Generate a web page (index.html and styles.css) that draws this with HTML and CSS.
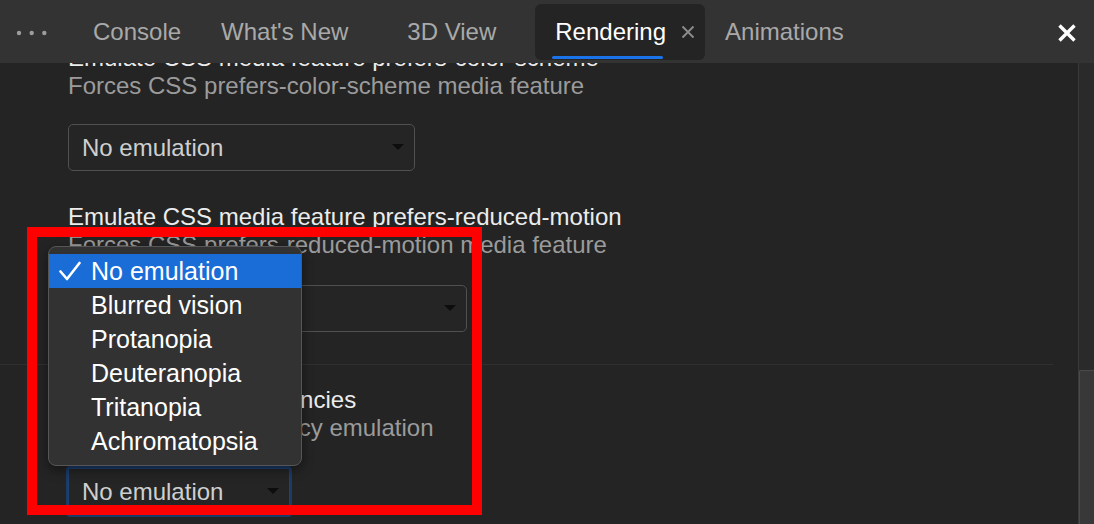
FILE: index.html
```html
<!DOCTYPE html>
<html lang="en">
<head>
<meta charset="utf-8">
<title>Rendering</title>
<link rel="stylesheet" href="styles.css">
</head>
<body>
<div class="tabbar">
  <div class="more">
    <svg width="40" height="8" viewBox="0 0 40 8"><circle cx="5" cy="4" r="2.2"/><circle cx="17.7" cy="4" r="2.2"/><circle cx="30.3" cy="4" r="2.2"/></svg>
  </div>
  <div class="tab">Console</div>
  <div class="tab closeable">What's New<span class="tab-close ghost"></span></div>
  <div class="tab closeable">3D View<span class="tab-close ghost"></span></div>
  <div class="tab closeable active">Rendering<span class="tab-close"><svg width="14" height="14" viewBox="0 0 14 14"><path d="M1.5 1.5 L12.5 12.5 M12.5 1.5 L1.5 12.5"/></svg></span></div>
  <div class="tab">Animations</div>
  <div class="spacer"></div>
  <div class="panel-close"><svg width="20" height="20" viewBox="0 0 20 20"><path d="M2.5 2.5 L17.5 17.5 M17.5 2.5 L2.5 17.5"/></svg></div>
</div>
<div class="main">
  <div class="content">
    <div class="scrolled">
      <div class="group">
        <div class="setting">
          <div class="title">Emulate CSS media feature prefers-color-scheme</div>
          <div class="desc">Forces CSS prefers-color-scheme media feature</div>
          <div class="select w-color"><span>No emulation</span><i class="arrow"></i></div>
        </div>
        <div class="setting">
          <div class="title">Emulate CSS media feature prefers-reduced-motion</div>
          <div class="desc">Forces CSS prefers-reduced-motion media feature</div>
          <div class="select w-motion"><span>No emulation</span><i class="arrow"></i></div>
        </div>
      </div>
      <div class="divider"></div>
      <div class="group">
        <div class="setting">
          <div class="title">Emulate vision deficiencies</div>
          <div class="desc">Forces vision deficiency emulation</div>
          <div class="select w-vision focused"><span>No emulation</span><i class="arrow"></i></div>
        </div>
      </div>
    </div>
  </div>
  <div class="scrollbar"><div class="thumb"></div></div>
</div>

<div class="highlight-box"></div>

<div class="popup">
  <div class="item selected"><span class="check"><svg width="22" height="20" viewBox="0 0 22 20"><path d="M1.5 10.5 L8 18 L20.5 2"/></svg></span>No emulation</div>
  <div class="item"><span class="check"></span>Blurred vision</div>
  <div class="item"><span class="check"></span>Protanopia</div>
  <div class="item"><span class="check"></span>Deuteranopia</div>
  <div class="item"><span class="check"></span>Tritanopia</div>
  <div class="item"><span class="check"></span>Achromatopsia</div>
</div>
</body>
</html>
```

FILE: styles.css
```css
* { box-sizing: border-box; }
html, body {
  margin: 0;
  padding: 0;
  width: 1094px;
  height: 524px;
  overflow: hidden;
  background: #242424;
  font-family: "Liberation Sans", Arial, sans-serif;
}

.tabbar {
  height: 63px;
  background: #333333;
  display: flex;
  align-items: center;
  color: #a9a9a9;
  font-size: 24px;
}
.more {
  width: 73px;
  height: 56px;
  display: flex;
  align-items: center;
  padding-left: 14px;
  padding-top: 3px;
}
.more svg { fill: #9c9c9c; }
.tab {
  height: 56px;
  display: flex;
  align-items: center;
  padding: 0 20px;
  white-space: nowrap;
  position: relative;
}
.tab.closeable { padding-right: 10px; }
.tab-close {
  width: 14px;
  height: 14px;
  margin-left: 15px;
  display: flex;
}
.tab-close.ghost { visibility: hidden; }
.tab-close svg { stroke: #8a8a8a; stroke-width: 2; fill: none; }
.tab.active {
  background: #242424;
  color: #ffffff;
  border-radius: 6px;
}
.tab.active::after {
  content: "";
  position: absolute;
  left: 17px;
  width: 111px;
  bottom: 1px;
  height: 3px;
  border-radius: 2px;
  background: #1a73e8;
}
.spacer { flex: 1; }
.panel-close {
  width: 20px;
  height: 20px;
  margin-right: 17px;
  margin-top: 3px;
  display: flex;
}
.panel-close svg { stroke: #ffffff; stroke-width: 3.4; fill: none; }

.main {
  display: flex;
  height: 461px;
}
.content {
  flex: 1;
  overflow: hidden;
}
.scrolled {
  margin-top: -19px;
}
.group {
  padding-left: 68px;
}
.setting + .setting { margin-top: 32px; }
.title {
  font-size: 24px;
  line-height: 28px;
  color: #ececec;
  white-space: nowrap;
}
.desc {
  font-size: 24px;
  line-height: 28px;
  color: #9b9b9b;
  white-space: nowrap;
}
.select {
  margin-top: 24px;
  height: 47px;
  border: 1px solid #505050;
  border-radius: 5px;
  background: #252525;
  display: flex;
  align-items: center;
  justify-content: space-between;
  padding: 0 10px 0 13px;
  font-size: 24px;
  color: #cfcfcf;
}
.setting + .setting .select { margin-top: 26px; }
.w-color { width: 347px; }
.w-motion { width: 399px; }
.w-vision { width: 222px; margin-top: 26px; }
.select.focused {
  border-color: #1e4274;
  box-shadow: 0 0 0 2px #1b3b68;
  border-radius: 2px;
}
.arrow {
  width: 0;
  height: 0;
  border-left: 6px solid transparent;
  border-right: 6px solid transparent;
  border-top: 6px solid #0d0d0d;
  margin-top: -1px;
}
.divider {
  height: 1px;
  background: #303030;
  margin: 32px 25px 21px 0;
}

.scrollbar {
  width: 16px;
  background: #2a2a2a;
  border-left: 1px solid #3a3a3a;
  display: flex;
  flex-direction: column;
}
.thumb {
  margin-top: auto;
  height: 154px;
  background: #383838;
  border-top: 1px solid #4a4a4a;
  border-left: 1px solid #4a4a4a;
  border-top-left-radius: 2px;
}

.highlight-box {
  position: absolute;
  left: 27px;
  top: 227px;
  width: 455px;
  height: 288px;
  border: 10px solid #ff0000;
}

.popup {
  position: absolute;
  left: 48px;
  top: 246px;
  width: 254px;
  height: 220px;
  background: #323232;
  border: 1px solid #565656;
  border-radius: 8px;
  padding: 7px 0;
  box-shadow: 0 4px 12px rgba(0, 0, 0, 0.45);
  overflow: hidden;
}
.item {
  height: 34px;
  display: flex;
  align-items: center;
  font-size: 25px;
  color: #ffffff;
  white-space: nowrap;
}
.item.selected { background: #1a6dd7; }
.check {
  width: 42px;
  height: 34px;
  display: flex;
  align-items: center;
  padding-left: 10px;
}
.check svg { stroke: #ffffff; stroke-width: 2.6; fill: none; stroke-linecap: round; stroke-linejoin: round; }
```
